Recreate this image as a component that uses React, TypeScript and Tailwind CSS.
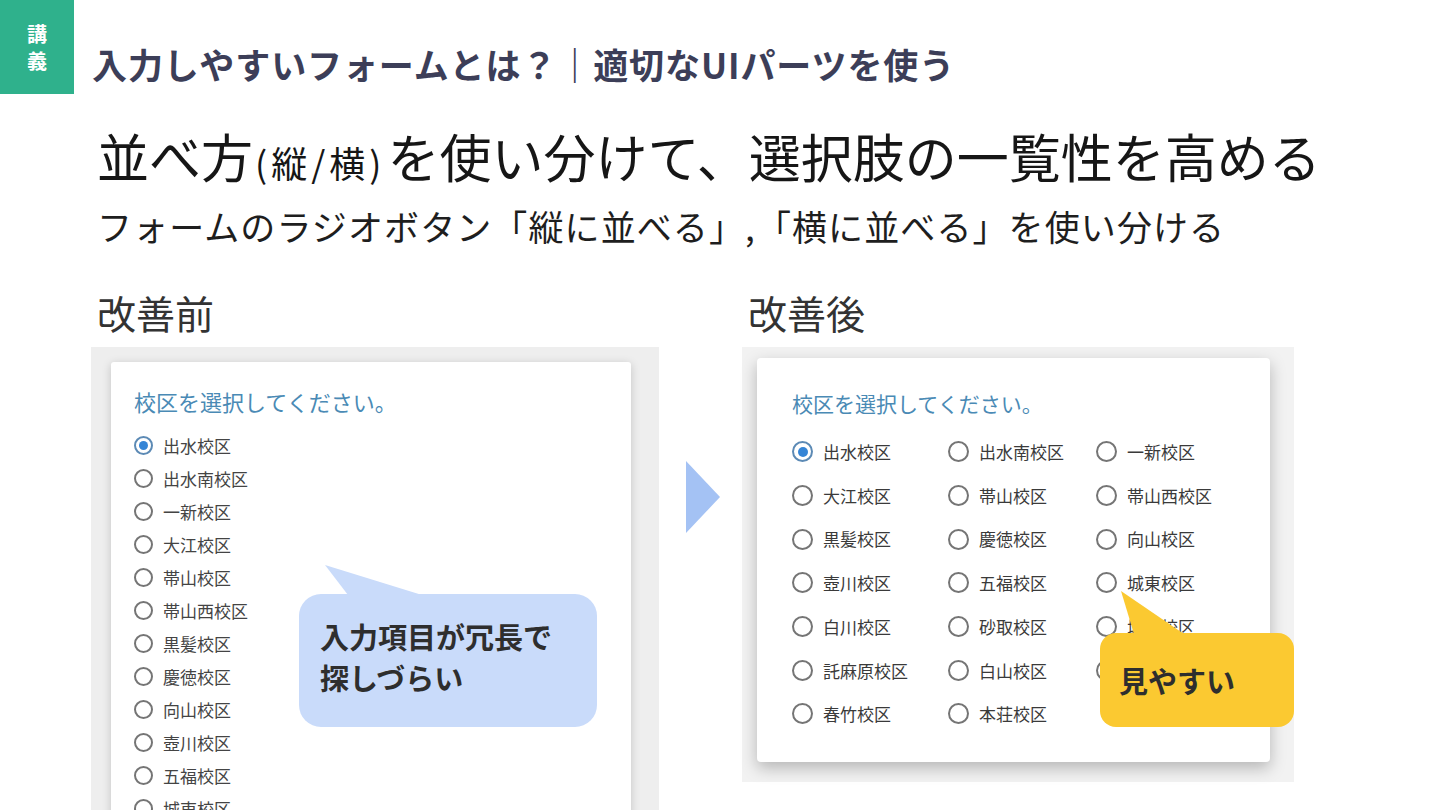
import type { ReactNode } from "react";

const jp = "font-['Noto_Sans_CJK_JP','Noto_Sans',sans-serif]";

const verticalList = [
  "出水校区",
  "出水南校区",
  "一新校区",
  "大江校区",
  "帯山校区",
  "帯山西校区",
  "黒髪校区",
  "慶徳校区",
  "向山校区",
  "壺川校区",
  "五福校区",
  "城東校区",
];

const gridList = [
  "出水校区",
  "出水南校区",
  "一新校区",
  "大江校区",
  "帯山校区",
  "帯山西校区",
  "黒髪校区",
  "慶徳校区",
  "向山校区",
  "壺川校区",
  "五福校区",
  "城東校区",
  "白川校区",
  "砂取校区",
  "城西校区",
  "託麻原校区",
  "白山校区",
  "城北校区",
  "春竹校区",
  "本荘校区",
];

function Radio({ checked, size }: { checked: boolean; size: "sm" | "md" }) {
  const box = size === "sm" ? "h-[19px] w-[19px]" : "h-[21px] w-[21px]";
  const dot = size === "sm" ? "h-[9px] w-[9px]" : "h-[10px] w-[10px]";
  return (
    <span
      className={`flex shrink-0 items-center justify-center rounded-full border-2 bg-white ${box} ${
        checked ? "border-[#5c8ab5]" : "border-[#757575]"
      }`}
    >
      {checked && <span className={`rounded-full bg-[#3585d6] ${dot}`} />}
    </span>
  );
}

function Callout({
  className,
  tail,
  color,
  children,
}: {
  className: string;
  tail: string;
  color: string;
  children: ReactNode;
}) {
  return (
    <div className={`absolute ${className}`}>
      <svg
        className="absolute left-0 top-[-50px] overflow-visible"
        width="140"
        height="52"
        viewBox="0 0 140 52"
      >
        <polygon points={tail} fill={color} />
      </svg>
      <div className="relative h-full w-full">{children}</div>
    </div>
  );
}

export default function App() {
  return (
    <div className={`relative h-[810px] w-[1440px] overflow-hidden bg-white ${jp}`}>
      {/* header */}
      <div className="flex">
        <div className="flex h-[94px] w-[74px] flex-col items-center justify-center bg-[#2fb18c] text-[20px] font-bold leading-[27px] text-white">
          <span>講</span>
          <span>義</span>
        </div>
        <div className="ml-[18px] pt-[42px] text-[35px] font-bold leading-[44px] tracking-[0.9px] text-[#3c3e58]">
          入力しやすいフォームとは？｜適切なUIパーツを使う
        </div>
      </div>

      {/* headline */}
      <div className="pl-[97px]">
        <h1 className="mt-[32px] text-[52px] font-normal leading-[60px] text-[#161616]">
          並べ方<span className="mx-[2px] text-[36px] tracking-[4px]">(縦/横)</span>を使い分けて、選択肢の一覧性を高める
        </h1>
        <p className="mt-[12px] text-[35px] leading-[44px] tracking-[1.1px] text-[#1e1e1e]">
          フォームのラジオボタン「縦に並べる」,「横に並べる」を使い分ける
        </p>
      </div>

      {/* comparison */}
      <div className="mt-[42px] flex pl-[91px]">
        {/* before */}
        <div className="w-[568px]">
          <div className="pl-[6px] text-[39px] leading-[44px] text-[#333333]">改善前</div>
          <div className="relative mt-[13px] h-[470px] bg-[#eeeeee] pl-[20px] pr-[28px] pt-[15px]">
            <div className="h-[480px] rounded-[3px] bg-white pl-[23px] pt-[24px] shadow-[0_2px_10px_rgba(0,0,0,0.18)]">
              <div className="text-[22px] leading-[30px] text-[#4a8ab5]">校区を選択してください。</div>
              <div className="mt-[13px] flex flex-col">
                {verticalList.map((name, i) => (
                  <div key={name} className="flex h-[33px] items-center gap-[10px]">
                    <Radio checked={i === 0} size="sm" />
                    <span className="text-[17px] text-[#444444]">{name}</span>
                  </div>
                ))}
              </div>
            </div>
            <Callout
              className="left-[208px] top-[247px] h-[133px] w-[298px]"
              tail="26,21 49,51 123,51"
              color="#c9dbfa"
            >
              <div className="h-full w-full rounded-[22px] bg-[#c9dbfa] pl-[21px] pt-[22px] text-[29px] font-bold leading-[41px] text-[#2e2e2e]">
                入力項目が冗長で
                <br />
                探しづらい
              </div>
            </Callout>
          </div>
        </div>

        {/* arrow */}
        <div className="w-[83px] pl-[27px] pt-[171px]">
          <svg width="34" height="72" viewBox="0 0 34 72">
            <polygon points="0,0 34,36 0,72" fill="#a4c2f4" />
          </svg>
        </div>

        {/* after */}
        <div className="w-[552px]">
          <div className="pl-[6px] text-[39px] leading-[44px] text-[#333333]">改善後</div>
          <div className="relative mt-[13px] h-[435px] bg-[#f2f2f2] pl-[15px] pr-[24px] pt-[11px]">
            <div className="h-[404px] rounded-[4px] bg-white pl-[35px] pt-[31px] shadow-[0_6px_16px_rgba(0,0,0,0.25)]">
              <div className="text-[21px] leading-[28px] text-[#4a8ab5]">校区を選択してください。</div>
              <div className="mt-[13px] grid grid-cols-[156px_148px_140px]">
                {gridList.map((name, i) => (
                  <div key={name} className="flex h-[43.7px] items-center gap-[10px]">
                    <Radio checked={i === 0} size="md" />
                    <span className="text-[17px] text-[#3a3a3a]">{name}</span>
                  </div>
                ))}
              </div>
            </div>
            <Callout
              className="left-[358px] top-[286px] h-[94px] w-[194px]"
              tail="21,8 34,51 84,51"
              color="#fbc931"
            >
              <div className="flex h-full w-full items-center rounded-[16px] bg-[#fbc931] pl-[19px] pt-[2px] text-[29px] font-bold text-[#2e2e2e]">
                見やすい
              </div>
            </Callout>
          </div>
        </div>
      </div>
    </div>
  );
}
